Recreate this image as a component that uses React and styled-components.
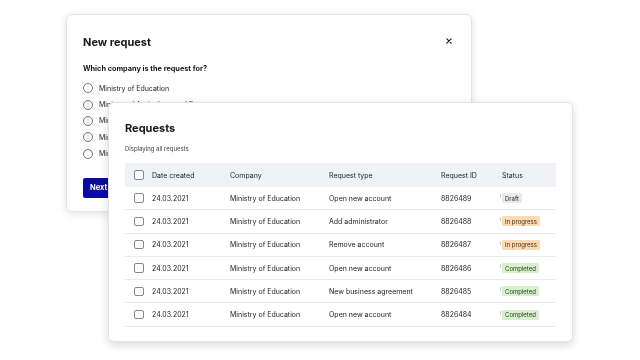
import React from "react";
import styled, { createGlobalStyle } from "styled-components";

const Global = createGlobalStyle`
  html, body { margin: 0; padding: 0; background: #ffffff; }
  body {
    font-family: Inter, "Noto Sans", "Liberation Sans", sans-serif;
    color: #1c1d22;
    -webkit-font-smoothing: antialiased;
  }
  * { box-sizing: border-box; }
`;

const Stage = styled.div`
  position: relative;
  width: 640px;
  height: 360px;
  padding: 14px 0 0 66px;
  overflow: hidden;
`;

const Card = styled.div`
  background: #fff;
  border: 1px solid #e2e4e9;
  border-radius: 6px;
  box-shadow: 0 2px 8px rgba(20, 24, 40, 0.12);
  will-change: transform;
`;

const BackCard = styled(Card)`
  width: 406px;
  height: 198px;
  padding: 19px 16px 0 16px;
  display: flex;
  flex-direction: column;
`;

const FrontCard = styled(Card)`
  position: absolute;
  left: 108px;
  top: 102px;
  width: 465px;
  height: 240px;
  padding: 17px 16px 0 16px;
  box-shadow: 0 3px 10px rgba(20, 24, 40, 0.16);
`;

const HeaderRow = styled.div`
  display: flex;
  align-items: center;
  justify-content: space-between;
  height: 16px;
`;

const Title = styled.h2`
  margin: 0;
  font-size: 11px;
  line-height: 16px;
  font-weight: 700;
  color: #17181c;
`;

const Close = styled.button`
  border: 0;
  background: none;
  padding: 0;
  margin-right: 1px;
  margin-top: -3px;
  width: 10px;
  height: 10px;
  display: flex;
  align-items: center;
  justify-content: center;
  color: #1c1d22;
`;

const Question = styled.div`
  margin-top: 14px;
  font-size: 7.3px;
  line-height: 10px;
  font-weight: 700;
  color: #17181c;
`;

const RadioList = styled.div`
  margin-top: 6px;
  display: flex;
  flex-direction: column;
`;

const RadioRow = styled.label`
  display: flex;
  align-items: center;
  gap: 6px;
  height: 16.4px;
  font-size: 7px;
  color: #232428;
`;

const RadioCircle = styled.span`
  width: 10px;
  height: 10px;
  border-radius: 50%;
  border: 1px solid #6e7178;
  background: #fff;
  flex: none;
`;

const NextButton = styled.button`
  margin-top: 16px;
  align-self: flex-start;
  height: 20px;
  padding: 0 10px 0 7px;
  border: 0;
  border-radius: 2px;
  background: #0b0ba3;
  color: #fff;
  font-family: inherit;
  font-size: 7.5px;
  font-weight: 700;
`;

const Subtitle = styled.div`
  margin-top: 8px;
  font-size: 6px;
  line-height: 10px;
  color: #3c3e44;
`;

const Table = styled.div`
  margin-top: 9px;
  display: flex;
  flex-direction: column;
`;

const Row = styled.div`
  display: grid;
  grid-template-columns: 18px 78px 99px 112px 61px 1fr;
  align-items: center;
  padding-left: 9px;
  height: ${(p) => (p.$head ? "24px" : "23.3px")};
  background: ${(p) => (p.$head ? "#f1f2f5" : "transparent")};
  border-bottom: ${(p) => (p.$head ? "none" : "1px solid #e9eaee")};
  font-size: 7px;
  color: #232428;
`;

const Check = styled.span`
  width: 9.5px;
  height: 9.5px;
  border: 1px solid #85888f;
  border-radius: 2px;
  background: #fff;
`;

const Cell = styled.span`
  white-space: nowrap;
`;

const StatusCell = styled.span`
  display: flex;
  align-items: center;
  margin-left: -2px;
`;

const Tick = styled.span`
  width: 1px;
  height: 4px;
  margin-top: -4px;
  margin-right: 1px;
  background: #c9cbd0;
`;

const badgeColors = {
  Draft: ["#e8eaee", "#2a2a2e"],
  "In progress": ["#fdd9b4", "#4a2e12"],
  Completed: ["#d6f1cc", "#25401f"],
};

const Badge = styled.span`
  display: inline-flex;
  align-items: center;
  height: 10px;
  padding: 0 3px;
  border-radius: 1px;
  font-size: 6px;
  background: ${(p) => badgeColors[p.$status][0]};
  color: ${(p) => badgeColors[p.$status][1]};
`;

const companies = [
  "Ministry of Education",
  "Ministry of Agriculture and Forestry",
  "Ministry of Finance",
  "Ministry of Justice",
  "Ministry of the Interior",
];

const rows = [
  ["Open new account", "8826489", "Draft"],
  ["Add administrator", "8826488", "In progress"],
  ["Remove account", "8826487", "In progress"],
  ["Open new account", "8826486", "Completed"],
  ["New business agreement", "8826485", "Completed"],
  ["Open new account", "8826484", "Completed"],
];

export default function App() {
  return (
    <>
      <Global />
      <Stage>
        <BackCard>
          <HeaderRow>
            <Title>New request</Title>
            <Close aria-label="Close">
              <svg width="6" height="6" viewBox="0 0 6 6">
                <path d="M0.8 0.8L5.2 5.2M5.2 0.8L0.8 5.2" stroke="currentColor" strokeWidth="1.2" strokeLinecap="round" />
              </svg>
            </Close>
          </HeaderRow>
          <Question>Which company is the request for?</Question>
          <RadioList>
            {companies.map((c) => (
              <RadioRow key={c}>
                <RadioCircle />
                {c}
              </RadioRow>
            ))}
          </RadioList>
          <NextButton>Next</NextButton>
        </BackCard>

        <FrontCard>
          <Title>Requests</Title>
          <Subtitle>Displaying all requests</Subtitle>
          <Table>
            <Row $head>
              <Check />
              <Cell>Date created</Cell>
              <Cell>Company</Cell>
              <Cell>Request type</Cell>
              <Cell>Request ID</Cell>
              <Cell>Status</Cell>
            </Row>
            {rows.map(([type, id, status]) => (
              <Row key={id}>
                <Check />
                <Cell>24.03.2021</Cell>
                <Cell>Ministry of Education</Cell>
                <Cell>{type}</Cell>
                <Cell>{id}</Cell>
                <StatusCell>
                  <Tick />
                  <Badge $status={status}>{status}</Badge>
                </StatusCell>
              </Row>
            ))}
          </Table>
        </FrontCard>
      </Stage>
    </>
  );
}
